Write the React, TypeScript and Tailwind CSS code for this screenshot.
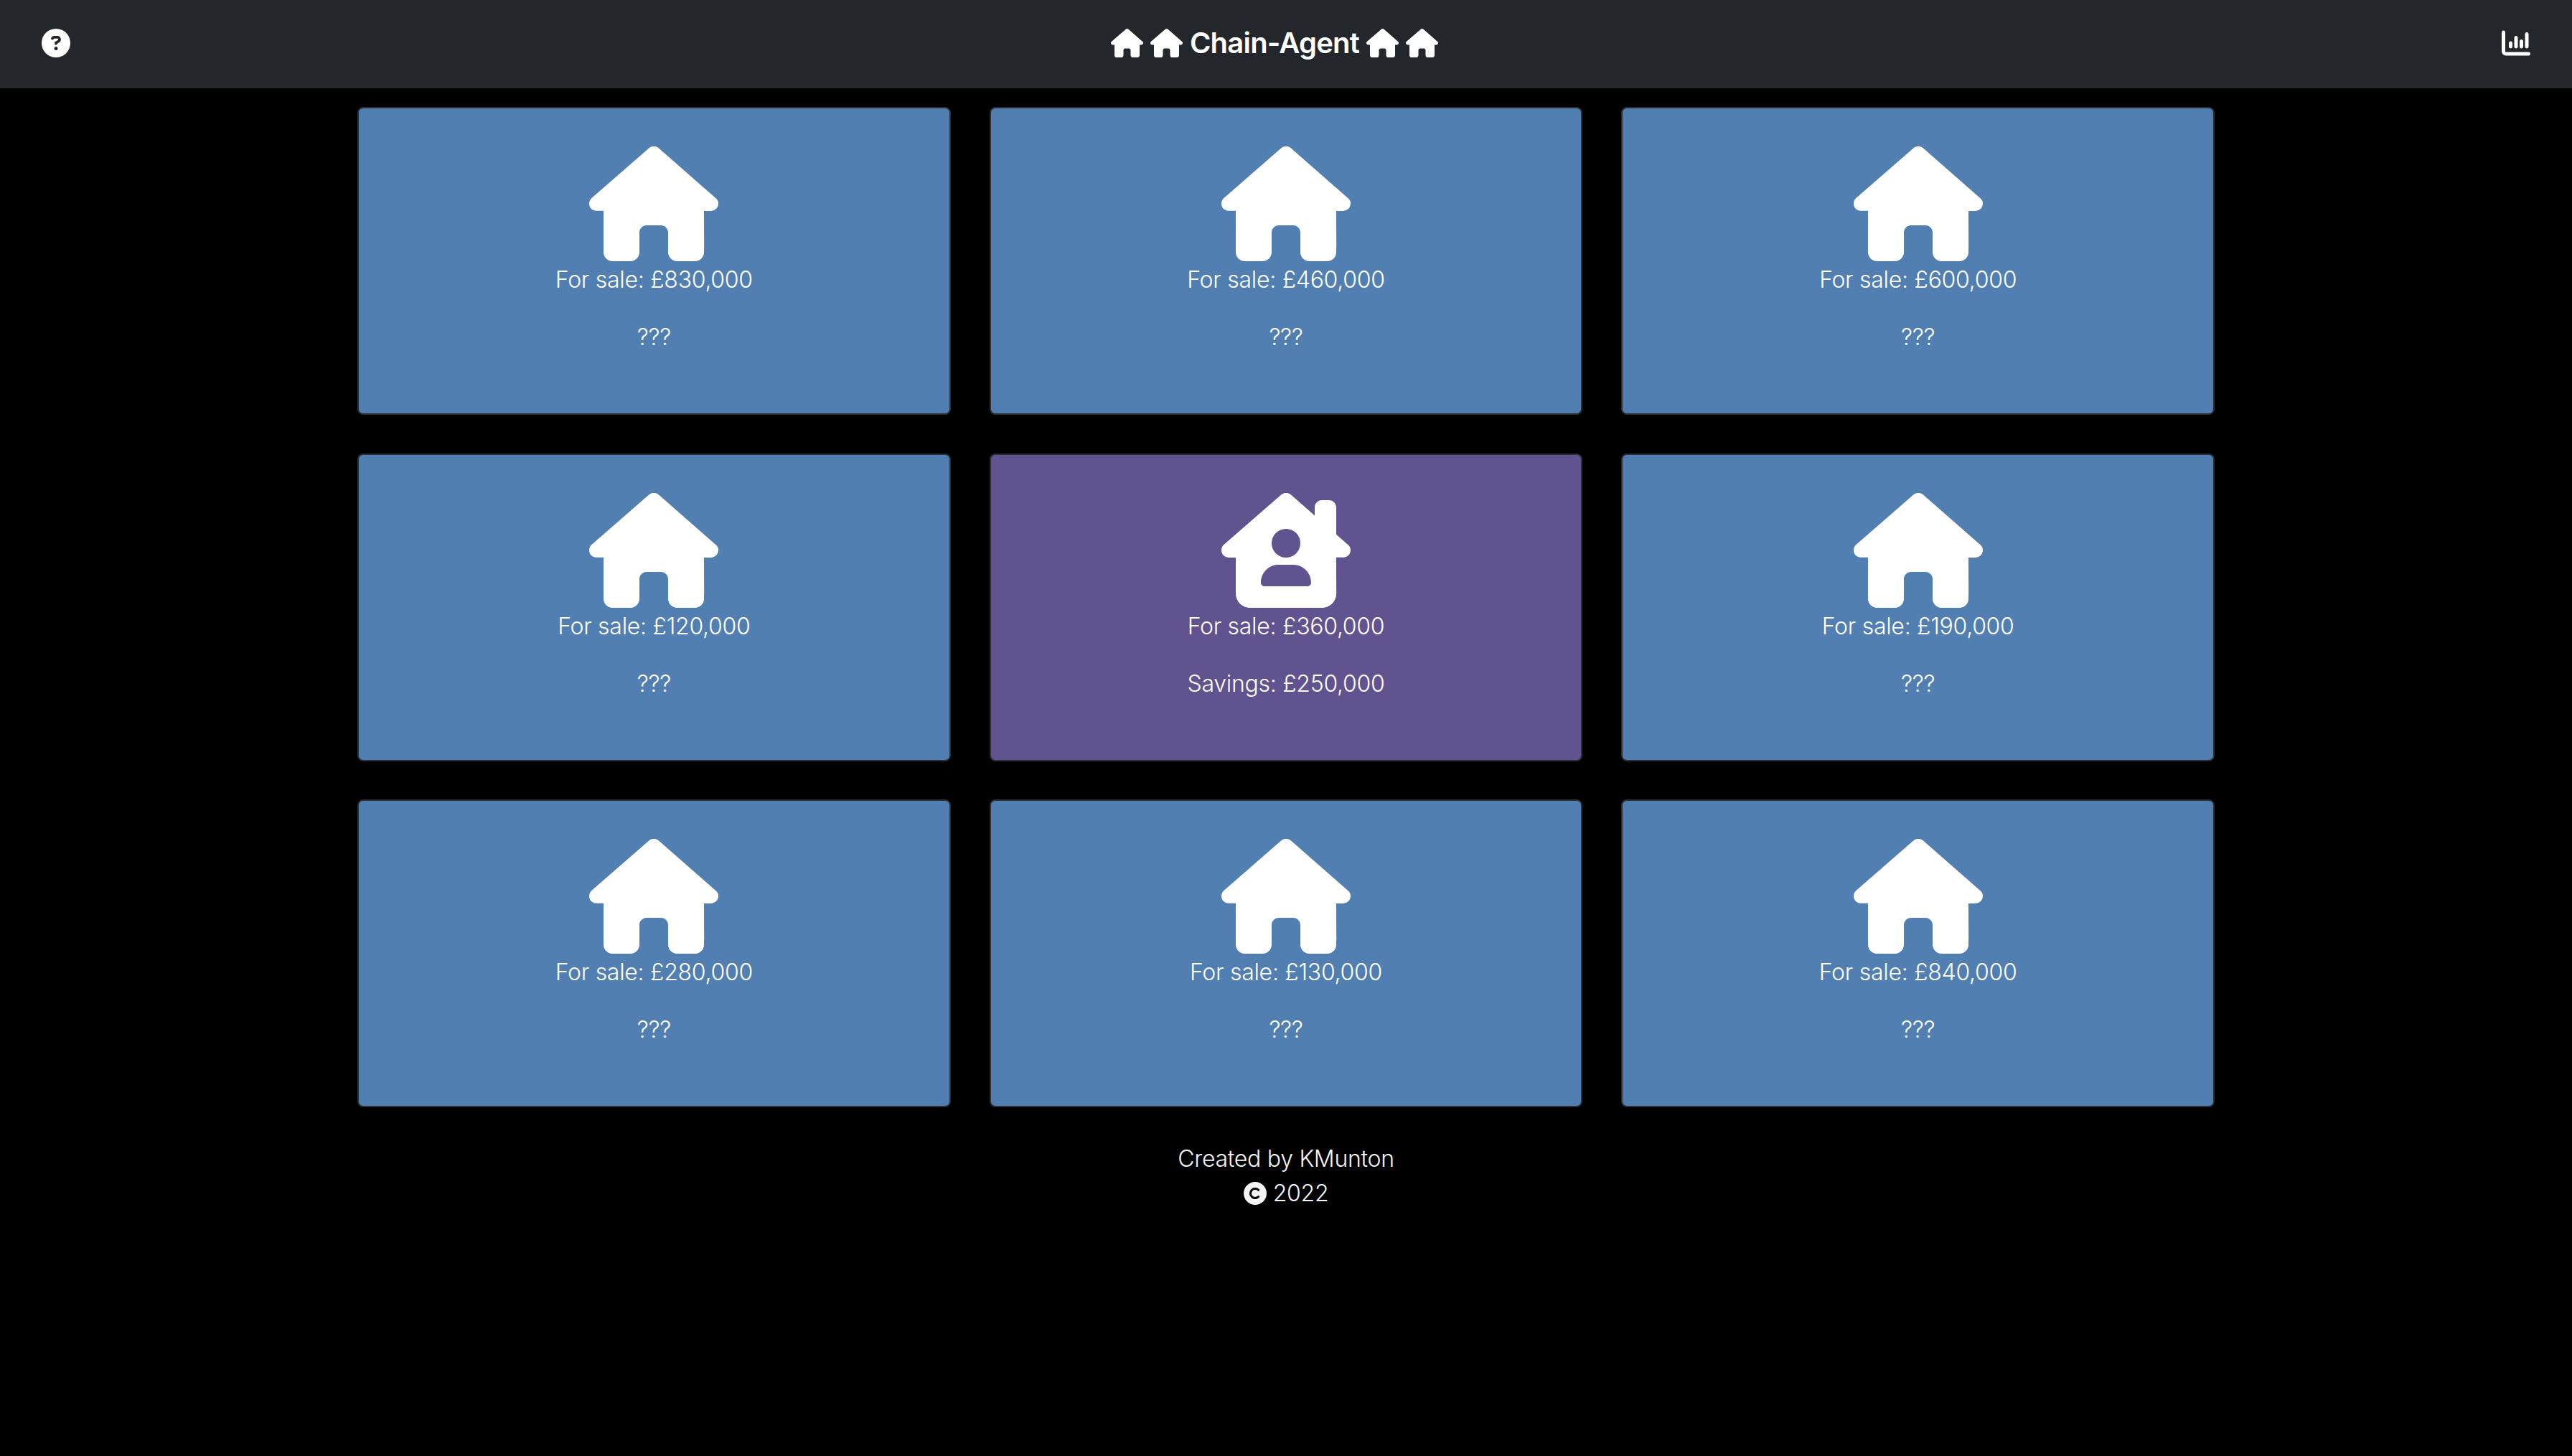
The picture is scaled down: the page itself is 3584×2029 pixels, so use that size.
import { FaHouse, FaHouseChimneyUser, FaCircleQuestion, FaChartColumn, FaCopyright } from "react-icons/fa6";

const cards = [
  { price: "£830,000" },
  { price: "£460,000" },
  { price: "£600,000" },
  { price: "£120,000" },
  { price: "£360,000", me: true },
  { price: "£190,000" },
  { price: "£280,000" },
  { price: "£130,000" },
  { price: "£840,000" },
];

export default function App() {
  return (
    <div className="min-h-screen bg-black text-white font-['Inter',sans-serif] text-[32px] leading-[48px] tracking-[-0.28px] font-[350]">
      <header className="h-[123px] bg-[#23272b] flex items-center justify-between pl-[58px] pr-[58px] pb-[3px]">
        <FaCircleQuestion className="w-[40px] h-[40px] text-white" />
        <div className="flex items-center gap-[10px] mr-[32px] text-[40px] font-semibold leading-[60px] tracking-[-0.8px]">
          <FaHouse className="w-[45px] h-[40px]" />
          <FaHouse className="w-[45px] h-[40px]" />
          <span>Chain-Agent</span>
          <FaHouse className="w-[45px] h-[40px]" />
          <FaHouse className="w-[45px] h-[40px]" />
        </div>
        <FaChartColumn className="w-[40px] h-[40px] text-white" />
      </header>
      <main className="w-[2588px] mx-auto pt-[26px] grid grid-cols-3 gap-x-[54px] gap-y-[53.5px]">
        {cards.map((c, i) => (
          <div
            key={i}
            className={`h-[429px] rounded-[8px] border-2 border-[#2c2e33] pt-[53px] flex flex-col items-center ${c.me ? "bg-[#60538f]" : "bg-[#527fb2]"}`}
          >
            {c.me ? (
              <FaHouseChimneyUser className="w-[180px] h-[160px] text-white" />
            ) : (
              <FaHouse className="w-[180px] h-[160px] text-white" />
            )}
            <p className="mt-[2px] mb-[32px]">For sale: {c.price}</p>
            <p>{c.me ? "Savings: £250,000" : "???"}</p>
          </div>
        ))}
      </main>
      <footer className="mt-[48px] flex flex-col items-center text-[#f5f5f5]">
        <div>Created by KMunton</div>
        <div className="flex items-center gap-[9px]">
          <FaCopyright className="w-[32px] h-[32px]" />
          <span>2022</span>
        </div>
      </footer>
    </div>
  );
}
